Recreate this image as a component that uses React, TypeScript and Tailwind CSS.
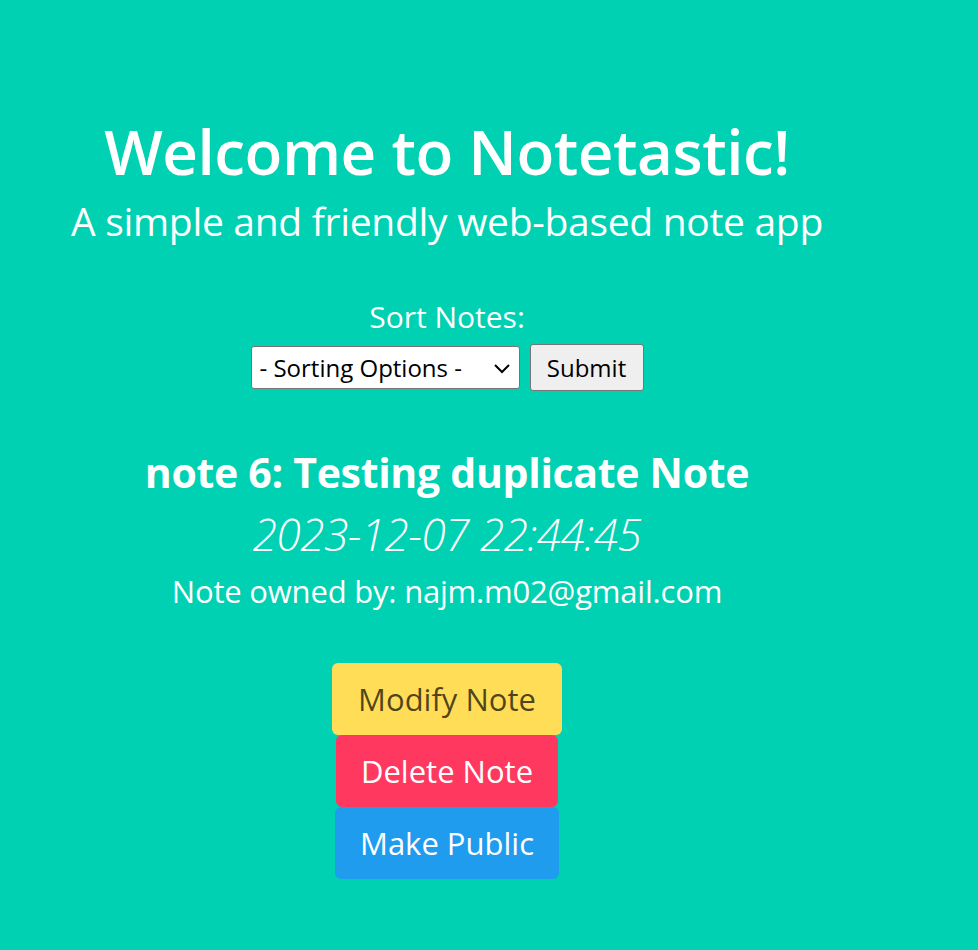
export default function App() {
  const f = { fontFamily: '"Open Sans", "Noto Sans", sans-serif' };
  return (
    <div className="min-h-[950px] w-full bg-[#00d1b2]" style={f}>
      <div className="w-[894px] flex flex-col items-center text-white text-center">
        <h1 className="mt-[111px] text-[62px] leading-[80px] font-semibold tracking-[-0.5px]">Welcome to Notetastic!</h1>
        <p className="mt-[7px] text-[39px] leading-[46px] font-normal tracking-[-0.3px]">A simple and friendly web-based note app</p>
        <p className="mt-[55px] text-[30px] leading-[36px]">Sort Notes:</p>
        <div className="flex items-center gap-[10px] mt-[9px]">
          <div className="w-[269px] h-[43px] bg-white border border-[#767676] rounded-[3px] flex items-center justify-between pl-[8px] pr-[8px] text-black text-[24px]">
            <span>- Sorting Options -</span>
            <svg width="18" height="12" viewBox="0 0 18 12" fill="none" stroke="black" strokeWidth="2"><path d="M2 3l7 7 7-7" /></svg>
          </div>
          <div className="w-[114px] h-[47px] bg-[#efefef] border border-[#767676] rounded-[3px] flex items-center justify-center text-black text-[24px]">Submit</div>
        </div>
        <h2 className="mt-[56px] text-[41px] leading-[50px] font-bold tracking-[-0.3px]">note 6: Testing duplicate Note</h2>
        <p className="mt-[12px] text-[44px] leading-[50px] italic font-light tracking-[-0.5px]">2023-12-07 22:44:45</p>
        <p className="mt-[12px] text-[31px] leading-[40px] tracking-[-0.2px]">Note owned by: najm.m02@gmail.com</p>
        <div className="mt-[52px] flex flex-col items-center">
          <button className="w-[230px] h-[72px] rounded-[6px] bg-[#ffdd57] text-black/70 text-[31px]">Modify Note</button>
          <button className="w-[222px] h-[72px] rounded-[6px] bg-[#ff3860] text-white text-[31px]">Delete Note</button>
          <button className="w-[224px] h-[72px] rounded-[6px] bg-[#209cee] text-white text-[31px]">Make Public</button>
        </div>
      </div>
    </div>
  );
}
